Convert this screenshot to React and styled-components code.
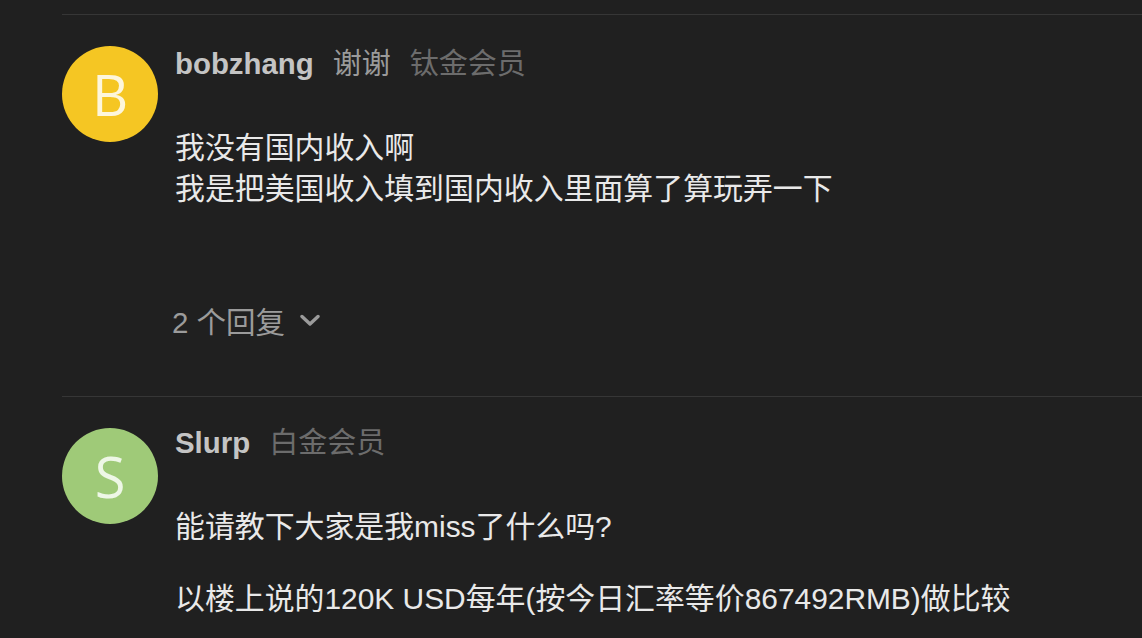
import React from "react";
import styled, { createGlobalStyle } from "styled-components";

const GlobalStyle = createGlobalStyle`
  html, body {
    margin: 0;
    padding: 0;
    background: #202020;
    overflow: hidden;
  }
  body {
    font-family: "Liberation Sans", "Noto Sans CJK SC", sans-serif;
  }
`;

const List = styled.div`
  width: 1142px;
  height: 638px;
  padding: 14px 0 0 62px;
  box-sizing: border-box;
  background: #202020;
`;

const Comment = styled.div`
  display: flex;
  gap: 17px;
  border-top: 1px solid #363636;
  padding: ${p => p.$top}px 0 ${p => p.$bottom}px 0;
`;

const Avatar = styled.div`
  flex: none;
  width: 96px;
  height: 96px;
  border-radius: 50%;
  background: ${p => p.$color};
  color: ${p => p.$ink};
  display: flex;
  align-items: center;
  justify-content: center;
  font-family: "Open Sans", sans-serif;
  font-size: 56px;
  line-height: 1;
`;

const Body = styled.div`
  display: flex;
  flex-direction: column;
  flex: 1;
`;

const Header = styled.div`
  display: flex;
  align-items: baseline;
  gap: 19px;
  height: 36px;
  line-height: 36px;
  margin-top: ${p => p.$offset}px;
`;

const Name = styled.span`
  font-weight: bold;
  font-size: 29.4px;
  color: #c4c4c4;
`;

const Tag = styled.span`
  font-size: 29px;
  color: ${p => p.$color};
`;

const Text = styled.div`
  margin-top: ${p => p.$gap}px;
  font-size: 29.9px;
  line-height: 41px;
  color: #e9e9e9;
  white-space: nowrap;
`;

const Replies = styled.div`
  display: flex;
  align-items: center;
  gap: 15px;
  margin-top: 93px;
  height: 36px;
  font-size: 29.5px;
  color: #9b9b9b;
  margin-left: -3px;
`;

const Chevron = () => (
  <svg width="20" height="14" viewBox="0 0 20 14">
    <polyline points="2,3.5 10,11 18,3.5" fill="none" stroke="#9b9b9b" strokeWidth="3.4" strokeLinecap="round" strokeLinejoin="round" />
  </svg>
);

export default function App() {
  return (
    <List>
      <GlobalStyle />
      <Comment $top={31} $bottom={58}>
        <Avatar $color="#f5c623" $ink="#fdf6dc">B</Avatar>
        <Body>
          <Header $offset={0}>
            <Name>bobzhang</Name>
            <Tag $color="#9a9a9a">谢谢</Tag>
            <Tag $color="#6c6c6c">钛金会员</Tag>
          </Header>
          <Text $gap={45}>
            我没有国内收入啊
            <br />
            我是把美国收入填到国内收入里面算了算玩弄一下
          </Text>
          <Replies>
            <span>2 个回复</span>
            <Chevron />
          </Replies>
        </Body>
      </Comment>
      <Comment $top={31} $bottom={0}>
        <Avatar $color="#9fca78" $ink="#eef7e6">S</Avatar>
        <Body>
          <Header $offset={-3}>
            <Name>Slurp</Name>
            <Tag $color="#6c6c6c">白金会员</Tag>
          </Header>
          <Text $gap={45}>能请教下大家是我miss了什么吗?</Text>
          <Text $gap={31}>以楼上说的120K USD每年(按今日汇率等价867492RMB)做比较</Text>
        </Body>
      </Comment>
    </List>
  );
}
